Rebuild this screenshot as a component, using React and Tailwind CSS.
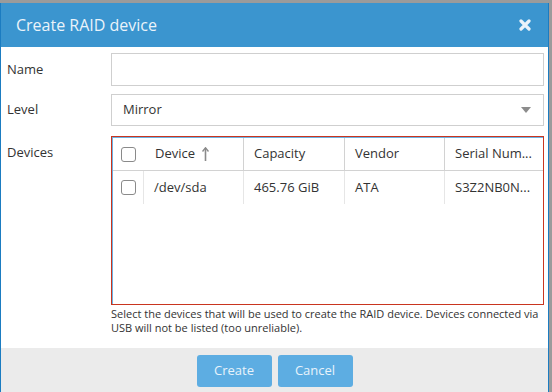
import React from 'react';

const Checkbox = () => (
  <span className="block w-[15px] h-[15px] rounded-[3px] border border-[#8a8a8a] bg-white" />
);

const App = () => {
  return (
    <div className="w-[552px] h-[392px] bg-[#9b9b9b] pt-[3px] overflow-hidden" style={{ fontFamily: '"Open Sans", "Liberation Sans", sans-serif' }}>
      <div className="w-[549px] h-[389px] flex flex-col bg-white border-x border-[#1b7cc1]">
        {/* header */}
        <div className="h-[44px] bg-[#3b95cf] flex items-center justify-between pl-[15px] pr-[17px]">
          <span className="text-[16px] text-[#eaf3fa]">Create RAID device</span>
          <svg width="12" height="12" viewBox="0 0 12 12">
            <path d="M2 2 L10 10 M10 2 L2 10" stroke="#eaf3fa" strokeWidth="3.2" strokeLinecap="round" />
          </svg>
        </div>

        {/* body */}
        <div className="flex-1 pt-[6px] pl-[6px] pr-[4px] text-[13px] text-[#333]">
          <div className="flex items-center h-[33px]">
            <span className="w-[104px]">Name</span>
            <div className="flex-1 h-[33px] border border-[#cfcfcf] bg-white" />
          </div>
          <div className="flex items-center h-[32px] mt-[8px]">
            <span className="w-[104px]">Level</span>
            <div className="flex-1 h-[32px] border border-[#cfcfcf] bg-white flex items-center justify-between pl-[11px] pr-[12px]">
              <span>Mirror</span>
              <svg width="10" height="6" viewBox="0 0 10 6">
                <path d="M0 0 L10 0 L5 6 Z" fill="#8c8c8c" />
              </svg>
            </div>
          </div>
          <div className="flex mt-[10px]">
            <span className="w-[104px] pt-[7px]">Devices</span>
            <div className="flex-1">
              <div className="h-[169px] border border-[#c9351f]">
                <div className="h-full border-l border-t border-[#6ab2e3]">
                  <div className="flex h-[33px] border-b border-[#d2d2d2] items-center">
                    <div className="w-[31px] h-full flex items-center justify-center">
                      <Checkbox />
                    </div>
                    <div className="w-[100px] h-full flex items-center pl-[11px] border-r border-[#d2d2d2]">
                      <span>Device</span>
                      <svg className="ml-[7px]" width="7" height="14" viewBox="0 0 7 14">
                        <path d="M3.5 1 L3.5 14" stroke="#8a8a8a" strokeWidth="1.6" />
                        <path d="M0.5 4.5 L3.5 0.8 L6.5 4.5" stroke="#8a8a8a" strokeWidth="1.4" fill="none" />
                      </svg>
                    </div>
                    <div className="w-[101px] h-full flex items-center pl-[10px] border-r border-[#d2d2d2]">Capacity</div>
                    <div className="w-[100px] h-full flex items-center pl-[10px] border-r border-[#d2d2d2]">Vendor</div>
                    <div className="flex-1 h-full flex items-center pl-[10px] whitespace-nowrap overflow-hidden">Serial Num...</div>
                  </div>
                  <div className="flex h-[33px] items-center">
                    <div className="w-[31px] h-full flex items-center justify-center border-r border-[#e6e6e6]">
                      <Checkbox />
                    </div>
                    <div className="w-[100px] h-full flex items-center pl-[10px] border-r border-[#e6e6e6]">/dev/sda</div>
                    <div className="w-[101px] h-full flex items-center pl-[10px] border-r border-[#e6e6e6]">465.76 GiB</div>
                    <div className="w-[100px] h-full flex items-center pl-[10px] border-r border-[#e6e6e6]">ATA</div>
                    <div className="flex-1 h-full flex items-center pl-[10px] whitespace-nowrap overflow-hidden">S3Z2NB0N...</div>
                  </div>
                </div>
              </div>
              <p className="text-[11px] leading-[14px] text-[#333] mt-[2px]">
                Select the devices that will be used to create the RAID device. Devices connected via USB will not be listed (too unreliable).
              </p>
            </div>
          </div>
        </div>

        {/* footer */}
        <div className="h-[44px] bg-[#ebebeb] flex items-center justify-center gap-[6px] pt-[1px]">
          <button className="w-[75px] h-[32px] rounded-[3px] bg-[#5dade2] text-[#e8f3fb] text-[13px]">Create</button>
          <button className="w-[75px] h-[32px] rounded-[3px] bg-[#5dade2] text-[#e8f3fb] text-[13px]">Cancel</button>
        </div>
      </div>
    </div>
  );
};

export default App;
